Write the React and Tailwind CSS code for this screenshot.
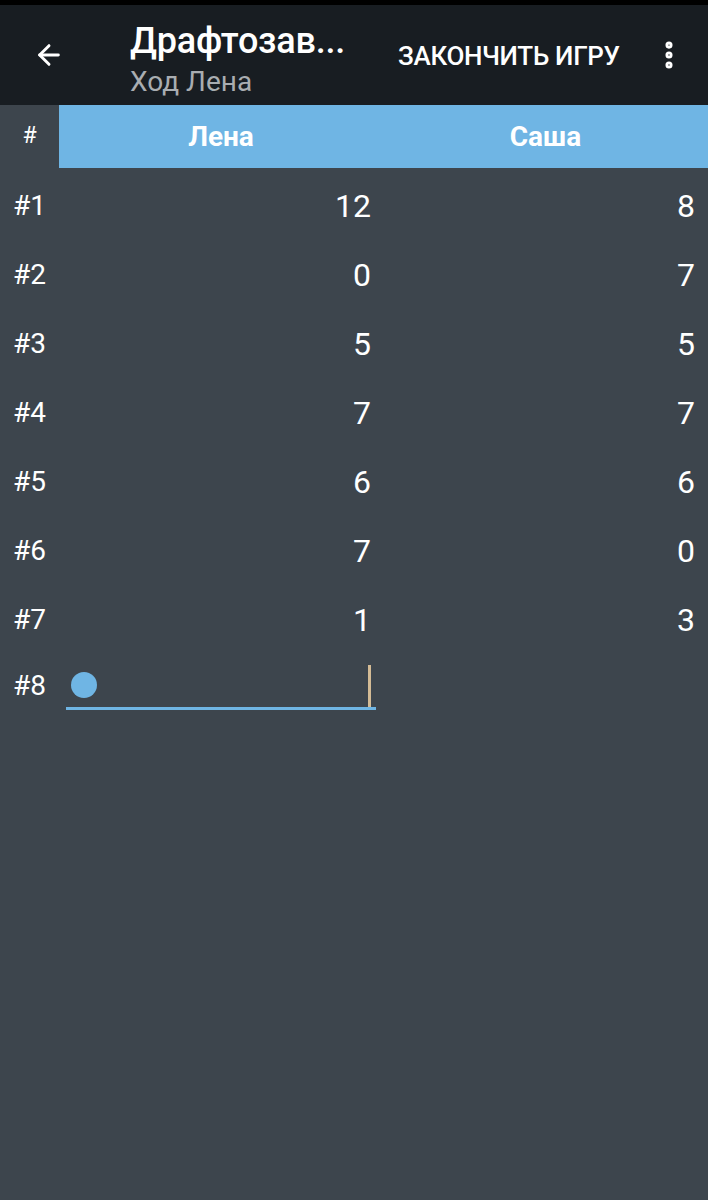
import { ArrowLeft, EllipsisVertical } from "lucide-react";

const rounds = [
  [12, 8],
  [0, 7],
  [5, 5],
  [7, 7],
  [6, 6],
  [7, 0],
  [1, 3],
];

export default function App() {
  return (
    <div className="w-[708px] h-[1200px] bg-[#3d454d] text-white font-['Roboto',sans-serif] flex flex-col">
      {/* status strip */}
      <div className="h-[5px] bg-black" />

      {/* APP BAR */}
      <header className="h-[100px] bg-[#181d22] flex items-center">
        <div className="w-[98px] flex justify-center">
          <ArrowLeft size={32} strokeWidth={2.2} />
        </div>
        <div className="flex flex-col ml-[32px] w-[262px] mt-[10px]">
          <span className="text-[36px] font-medium leading-[40px] tracking-[-0.2px]">Драфтозав...</span>
          <span className="text-[28px] leading-[34px] mt-[4px] text-[#a9adb1]">Ход Лена</span>
        </div>
        <span className="ml-[6px] text-[26px] font-medium tracking-[-0.3px] mt-[2px]">ЗАКОНЧИТЬ ИГРУ</span>
        <div className="ml-auto mr-[22px] flex">
          <EllipsisVertical size={34} strokeWidth={3} />
        </div>
      </header>

      {/* TABLE HEADER */}
      <div className="h-[63px] flex">
        <div className="w-[59px] flex items-center justify-center text-[23px]">#</div>
        <div className="flex-1 flex bg-[#6fb5e4] text-[28px] font-bold">
          <div className="w-[324px] flex items-center justify-center">Лена</div>
          <div className="flex-1 flex items-center justify-center">Саша</div>
        </div>
      </div>

      {/* ROWS */}
      <div className="flex flex-col">
        {rounds.map((r, i) => (
          <div key={i} className="h-[69px] pt-[6px] flex items-center text-[32px]">
            <div className="w-[59px] pl-[13px] text-[28px]">#{i + 1}</div>
            <div className="w-[324px] text-right pr-[12px]">{r[0]}</div>
            <div className="flex-1 text-right pr-[13px]">{r[1]}</div>
          </div>
        ))}

        {/* INPUT ROW */}
        <div className="h-[69px] flex items-center">
          <div className="w-[59px] pl-[13px] text-[28px]">#8</div>
          <div className="relative ml-[7px] w-[310px] h-[48px] border-b-[3px] border-[#6fb5e4] flex items-center">
            <div className="w-[26px] h-[26px] rounded-full bg-[#6fb5e4] ml-[5px] mt-[1px]" />
            <div className="absolute right-[5px] bottom-0 w-[3px] h-[42px] bg-[#d4bb95]" />
          </div>
        </div>
      </div>
    </div>
  );
}
